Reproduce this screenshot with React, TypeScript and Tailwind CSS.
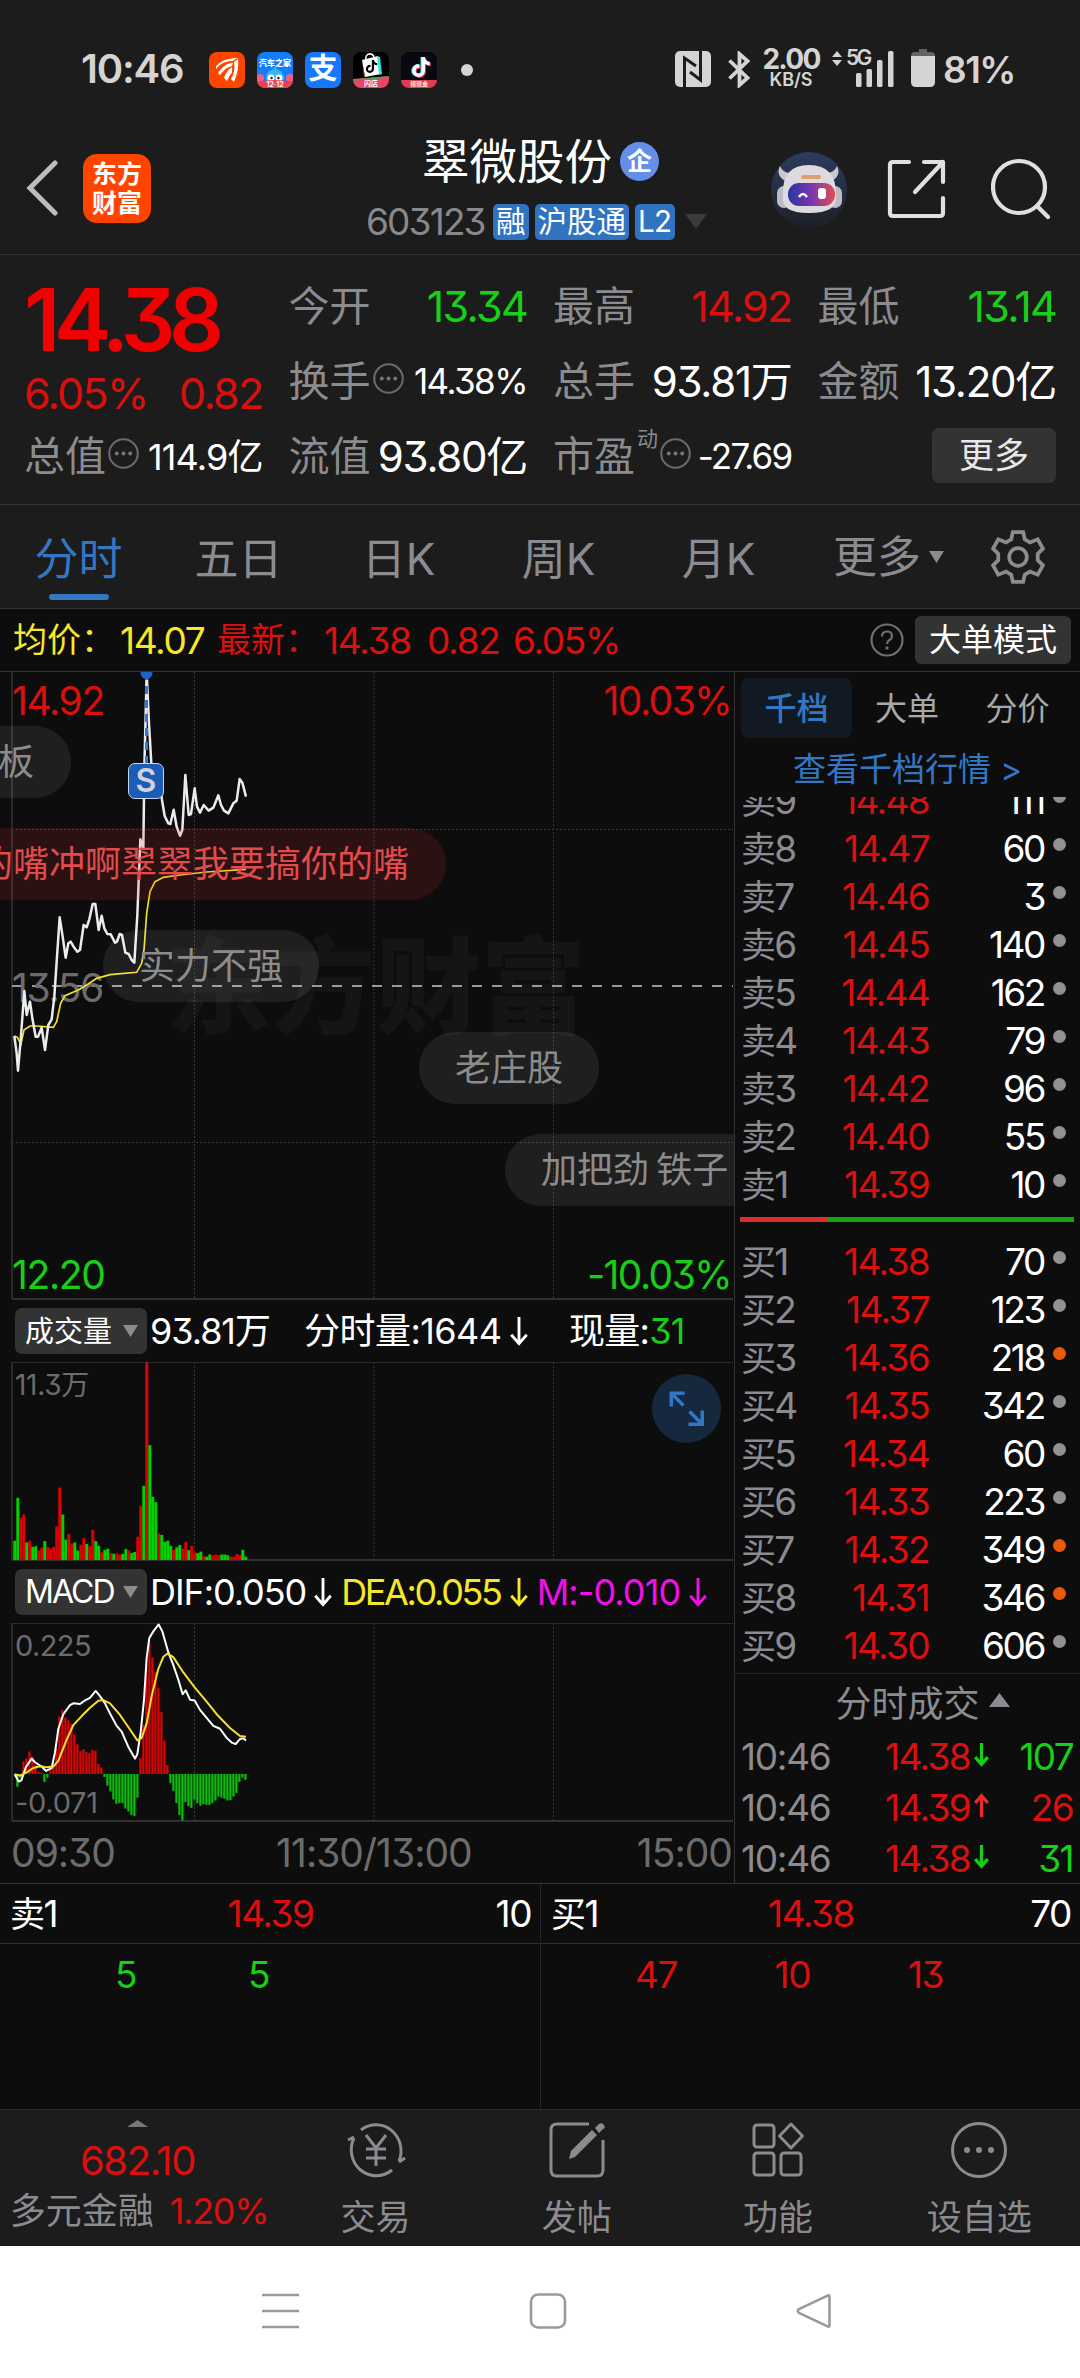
import type { ReactNode } from 'react'
import { FaTiktok } from 'react-icons/fa6'
import { clsx } from 'clsx'

const RED = 'text-[#dc0f0f]'
const GREEN = 'text-[#17cf17]'

const asks = [
  { label: '卖9', price: '14.48', volume: '111' },
  { label: '卖8', price: '14.47', volume: '60' },
  { label: '卖7', price: '14.46', volume: '3' },
  { label: '卖6', price: '14.45', volume: '140' },
  { label: '卖5', price: '14.44', volume: '162' },
  { label: '卖4', price: '14.43', volume: '79' },
  { label: '卖3', price: '14.42', volume: '96' },
  { label: '卖2', price: '14.40', volume: '55' },
  { label: '卖1', price: '14.39', volume: '10' },
]

const bids = [
  { label: '买1', price: '14.38', volume: '70' },
  { label: '买2', price: '14.37', volume: '123' },
  { label: '买3', price: '14.36', volume: '218', hot: true },
  { label: '买4', price: '14.35', volume: '342' },
  { label: '买5', price: '14.34', volume: '60' },
  { label: '买6', price: '14.33', volume: '223' },
  { label: '买7', price: '14.32', volume: '349', hot: true },
  { label: '买8', price: '14.31', volume: '346', hot: true },
  { label: '买9', price: '14.30', volume: '606' },
]

const trades = [
  { time: '10:46', price: '14.38', up: false, qty: '107' },
  { time: '10:46', price: '14.39', up: true, qty: '26' },
  { time: '10:46', price: '14.38', up: false, qty: '31' },
]

// positive = red bar, negative = green bar
const volumes = [
  -53, -171, 116, 125, -48, 53, -36, -38, 26, 34, -52, 36, 32, 36, 92, 199, -125, -56, 71, 45, -48, -26, 42, 60, -44,
  38, 83, -52, -39, 21, -28, -31, 19, -17, 18, 15, -17, -30, 26, -19, -22, 64, 148, -204, 543, -316, -174, -159, 73,
  -69, -50, -53, -39, 28, -35, -41, 31, 49, -27, 39, 21, -19, -23, 10, -9, -15, 12, 15, 13, -15, -15, -13, 9, 9, 16,
  14, -28, -9,
]

const macd = [
  0, -35, -10, 35, 43, 62, 48, 25, 6, 3, -22, -10, 10, 20, 70, 158, 176, 155, 148, 138, 108, 82, 63, 68, 60, 58, 66,
  64, 28, 18, -8, -32, -48, -70, -82, -80, -80, -95, -103, -113, -116, -65, 45, 135, 300, 360, 320, 280, 237, 170, 92,
  25, -25, -47, -80, -113, -128, -77, -88, -93, -70, -80, -87, -83, -85, -85, -80, -73, -62, -65, -68, -73, -72, -62,
  -52, -22, -10, -16,
]

const priceLine =
  '43,1128 50,1180 54,1232 62,1140 73,993 80,1065 90,1025 97,1075 107,1130 114,1130 125,1103 135,1170 145,1095 155,1078 163,1010 170,905 179,772 188,830 197,893 205,850 212,845 222,862 232,875 240,870 251,795 260,802 268,778 278,732 286,732 296,810 305,767 313,805 322,822 332,823 345,848 351,845 359,822 366,825 376,878 386,882 395,900 403,908 412,765 421,538 430,565 433,330 440,38 447,190 456,345 463,375 475,318 486,420 494,468 505,490 511,492 521,449 530,500 540,527 547,510 556,345 566,465 573,462 584,385 591,440 600,458 611,435 626,452 640,443 655,406 663,435 672,452 685,460 700,430 710,422 719,357 727,368 738,410'

const avgLine =
  '43,1128 52,1132 63,1152 72,1110 90,1098 110,1098 160,1102 170,1085 182,1030 195,1007 235,990 260,975 290,955 330,944 410,937 425,910 432,870 440,760 450,695 465,665 490,652 540,645 620,636 738,628'

const difLine =
  '44,1305 56,1325 64,1322 78,1285 95,1262 105,1272 125,1284 138,1296 155,1288 165,1245 175,1180 190,1140 210,1115 220,1110 240,1112 255,1102 270,1095 287,1076 300,1090 315,1110 330,1138 350,1172 365,1188 385,1230 405,1262 412,1250 422,1190 432,1100 440,985 448,930 460,912 476,893 487,912 505,970 520,1005 535,1045 548,1085 557,1074 570,1100 584,1102 600,1128 620,1150 640,1172 660,1180 680,1205 695,1218 707,1222 720,1208 730,1206 738,1212'

const deaLine =
  '44,1305 60,1309 80,1300 100,1288 120,1283 140,1286 160,1284 175,1268 200,1210 220,1170 245,1145 270,1122 295,1103 310,1101 330,1110 360,1142 390,1182 412,1212 425,1205 440,1165 455,1090 475,1015 490,982 503,973 520,983 550,1025 584,1066 615,1100 650,1140 690,1178 720,1200 738,1202'

function Triangle({ className, up = false }: { className?: string; up?: boolean }) {
  return (
    <svg viewBox="0 0 10 8" preserveAspectRatio="none" className={clsx('shrink-0 fill-current', className)}>
      <path d={up ? 'M5 0 10 8H0Z' : 'M0 0H10L5 8Z'} />
    </svg>
  )
}

function Arrow({ className, up = false, width = 2.6 }: { className?: string; up?: boolean; width?: number }) {
  return (
    <svg viewBox="0 0 18 28" className={clsx('shrink-0 fill-none stroke-current', className)} strokeWidth={width}>
      <path d={up ? 'M9 27V3M2 11 9 3l7 8' : 'M9 1v24M2 17l7 8 7-8'} />
    </svg>
  )
}

function InfoDots() {
  return (
    <svg viewBox="0 0 30 30" className="mb-[6px] ml-[2px] h-[31px] w-[31px] shrink-0 fill-[#77777b]">
      <circle cx="15" cy="15" r="13.8" fill="none" stroke="#6a6a6d" strokeWidth="2" />
      <circle cx="8.5" cy="15" r="1.9" />
      <circle cx="15" cy="15" r="1.9" />
      <circle cx="21.5" cy="15" r="1.9" />
    </svg>
  )
}

function StatusBar() {
  return (
    <div className="flex h-[140px] items-center pl-[81px] text-[#d4d4d4]">
      <span className="mb-[2px] w-[128px] text-[40px] font-semibold tracking-[-0.03em]">10:46</span>
      <div className="flex gap-3">
        <svg viewBox="0 0 36 36" className="h-9 w-9">
          <rect width="36" height="36" rx="8" fill="#ff4400" />
          <path d="M7 14C13 8 20 6 29 6c-3 1-4 2-5 3C17 9 12 11 7 17Z" fill="#fff" />
          <path d="M9 21c4-6 9-10 15-10l-1 3c-5 1-8 4-12 9Z" fill="#fff" />
          <path d="M15 26c2-6 5-9 8-11v6c-2 1-3 4-5 8Z" fill="#fff" />
          <path d="M25 10l4-3c1 8-1 16-4 23l-3-3c3-5 4-10 3-17Z" fill="#fff" />
        </svg>
        <div className="relative h-9 w-9 overflow-hidden rounded-[8px] bg-[#127dfa]">
          <svg viewBox="0 0 36 36" className="absolute inset-0">
            <circle cx="18" cy="26" r="9" fill="#37b4f5" />
            <path d="M18 14l3 5h-6Z" fill="#37b4f5" />
            <circle cx="14" cy="26" r="3.4" fill="#fff" />
            <circle cx="22" cy="26" r="3.4" fill="#fff" />
            <circle cx="14.6" cy="26" r="1.2" fill="#123" />
            <circle cx="21.4" cy="26" r="1.2" fill="#123" />
            <circle cx="3" cy="26" r="4" fill="#f0607e" />
            <circle cx="33" cy="26" r="4" fill="#f0607e" />
            <path d="M0 30Q18 26 36 30V36H0Z" fill="#f23d4c" />
          </svg>
          <span className="absolute inset-x-0 top-[7px] text-center text-[8px] leading-none font-black text-white">汽车之家</span>
          <span className="absolute inset-x-0 bottom-0 text-center text-[7px] leading-none font-bold text-white">12·12</span>
        </div>
        <div className="flex h-9 w-9 items-center justify-center rounded-[8px] bg-[#1677ff] text-[29px] leading-none font-bold text-white">
          <span className="-mt-1">支</span>
        </div>
        <div className="relative h-9 w-9 overflow-hidden rounded-[8px] bg-black">
          <svg viewBox="0 0 36 36" className="absolute inset-0">
            <path d="M13 7a4 4 0 0 1 8-2" fill="none" stroke="#fff" strokeWidth="1.6" />
            <path d="M9 8 25 4 28 22 12 25Z" fill="#fff" />
            <path d="M24 4l3 1 2 17-3 1Z" fill="#2ee6e0" />
            <path d="M9 8l3 17-1 0Z" fill="#fe2c55" />
            <path d="M0 27 36 24V36H0Z" fill="#ea4468" />
            <path d="M0 28 36 25" stroke="#4ba05c" strokeWidth="1.4" />
          </svg>
          <FaTiktok className="absolute top-[8px] left-[12px] h-[13px] w-[13px] text-black" />
          <span className="absolute inset-x-0 bottom-px text-center text-[7px] leading-none font-bold text-white">闪店</span>
        </div>
        <div className="relative h-9 w-9 overflow-hidden rounded-[8px] bg-[#080812]">
          <FaTiktok className="absolute top-[5px] left-[9px] h-5 w-5 text-[#25f4ee]" />
          <FaTiktok className="absolute top-[6px] left-[11px] h-5 w-5 text-[#fe2c55]" />
          <FaTiktok className="absolute top-[5px] left-[10px] h-5 w-5 text-white" />
          <div className="absolute inset-x-0 bottom-0 h-2 bg-[#e23a52] text-center text-[6px] leading-[8px] font-bold text-[#ffe9c4]">领现金</div>
        </div>
      </div>
      <div className="ml-6 h-3 w-3 rounded-full bg-[#d4d4d4]" />

      <svg viewBox="0 0 36 36" className="mb-[2px] ml-[202px] h-9 w-9">
        <rect width="36" height="36" rx="5" fill="#d4d4d4" />
        <path d="M9.500 36V7L21 15M25.500 0V29L15 21" fill="none" stroke="#1c1c1c" strokeWidth="3" />
      </svg>
      <svg viewBox="0 0 23 37" className="mb-[2px] ml-[17px] h-[37px] w-[23px] fill-none stroke-current" strokeWidth="3.8">
        <path d="M1.500 9.500 19.500 27 11.500 34V3l8 7L1.500 27.500" />
      </svg>
      <div className="mb-[4px] ml-[10px] flex w-[60px] flex-col items-center">
        <span className="text-[28px] leading-[22px] font-bold tracking-[-0.06em]">2.00</span>
        <span className="mt-px text-[18px] leading-[17px] font-semibold">KB/S</span>
      </div>
      <svg viewBox="0 0 10 15" className="mb-[24px] ml-[11px] h-[15px] w-[10px] fill-current">
        <path d="M5 0 10 6H0ZM5 15 0 9H10Z" />
      </svg>
      <div className="relative mb-[2px] ml-1 h-9 w-12">
        <span className="absolute -top-px left-0 text-[21px] leading-[16px] font-semibold tracking-[-0.13em]">5G</span>
        <svg viewBox="0 0 48 36" className="absolute inset-0 fill-current">
          <rect x="10" y="22" width="5.500" height="14" rx="1.500" />
          <rect x="20.500" y="18" width="5.500" height="18" rx="1.500" />
          <rect x="31" y="9" width="5.500" height="27" rx="1.500" />
          <rect x="42" y="0" width="5.500" height="36" rx="1.500" />
        </svg>
      </div>
      <svg viewBox="0 0 24 38" className="mb-[4px] ml-[17px] h-[38px] w-6">
        <path d="M8 0h8v3h4q4 0 4 4H0q0-4 4-4h4Z" fill="#636363" />
        <path d="M0 7h24v26q0 5-5 5H5q-5 0-5-5Z" fill="#d4d4d4" />
      </svg>
      <span className="mb-px ml-2 text-[37px] font-semibold tracking-[-0.04em]">81%</span>
    </div>
  )
}

function Tag({ children }: { children: ReactNode }) {
  return (
    <span className="flex h-[36px] shrink-0 items-center rounded-[5px] bg-[#3073c0] px-[3px] text-[29.500px] whitespace-nowrap text-white">
      {children}
    </span>
  )
}

function TitleBar() {
  return (
    <div className="flex h-[114px] items-center pb-[15px] pl-[26px]">
      <svg viewBox="0 0 32 56" className="mb-1 h-[56px] w-8 fill-none stroke-[#bdbdbd]" strokeWidth="5" strokeLinecap="round">
        <path d="M29 3 4 28l25 25" />
      </svg>
      <div className="mb-[2px] ml-[25px] flex h-[69px] w-[68px] flex-col items-center justify-center rounded-[14px] bg-[#ff4400] text-[25px] leading-[29px] font-bold text-white">
        <span>东方</span>
        <span>财富</span>
      </div>
      <div className="ml-[215px] flex w-[343px] flex-col pt-[7px]">
        <div className="flex h-[52px] items-center pl-[56px]">
          <span className="text-[47.500px] text-white">翠微股份</span>
          <span className="ml-[8px] flex h-[39px] w-[39px] items-center justify-center rounded-full bg-[#648ee8] text-[25px] font-bold text-white">
            企
          </span>
        </div>
        <div className="mt-[13px] flex h-[50px] items-center gap-[6px] pb-[8px]">
          <span className="w-[121px] shrink-0 text-[37px] tracking-[-0.05em] text-[#88888d]">603123</span>
          <Tag>融</Tag>
          <Tag>沪股通</Tag>
          <Tag>
            <span className="tracking-[-0.02em]">L2</span>
          </Tag>
          <Triangle className="ml-1 h-[15px] w-[22px] text-[#3b3b3b]" />
        </div>
      </div>
      <svg viewBox="0 0 76 76" className="ml-[62px] h-[76px] w-[76px]">
        <defs>
          <linearGradient id="disc" x1="0" y1="0" x2="0" y2="1">
            <stop offset="0" stopColor="#2c3c5e" />
            <stop offset="1" stopColor="#1d2027" />
          </linearGradient>
          <linearGradient id="visor">
            <stop offset="0" stopColor="#2a35a0" />
            <stop offset="0.5" stopColor="#7a36b0" />
            <stop offset="1" stopColor="#e0504e" />
          </linearGradient>
        </defs>
        <circle cx="38" cy="38" r="38" fill="url(#disc)" />
        <path d="M16 30Q4 24 9 14q3 7 10 7ZM59 30q12-6 7-16-3 7-10 7Z" fill="#c9c7cd" />
        <rect x="6" y="34" width="14" height="22" rx="7" fill="#bdbcc4" />
        <rect x="57" y="34" width="14" height="22" rx="7" fill="#bdbcc4" />
        <path d="M12 44Q10 13 38 13t27 31q2 17-27 17T12 44Z" fill="#dddbe0" />
        <rect x="17" y="31" width="47" height="23" rx="11" fill="url(#visor)" />
        <rect x="30" y="23" width="20" height="4" rx="2" fill="#dfa070" />
        <path d="M28 45q4-6 8 0" fill="none" stroke="#fff" strokeWidth="2.500" />
        <rect x="47" y="36" width="8" height="11" rx="3" fill="#fff" />
      </svg>
      <svg viewBox="0 0 59 60" className="mb-px ml-[40px] h-[60px] w-[59px] fill-none stroke-[#e0e0e0]" strokeWidth="4.200" strokeLinecap="round" strokeLinejoin="round">
        <path d="M22 3H6Q3 3 3 6V54q0 3 3 3H53q3 0 3-3V39M37 3H56V23M56 3 28 33" />
      </svg>
      <svg viewBox="0 0 60 62" className="mb-[2px] ml-[45px] h-[62px] w-[60px] fill-none stroke-[#e0e0e0]" strokeWidth="4.200" strokeLinecap="round">
        <circle cx="28" cy="29" r="26" />
        <path d="M46 48 57 59" />
      </svg>
    </div>
  )
}

interface StatProps {
  label: string
  value: string
  className?: string
  info?: boolean
  sup?: string
}

function Stat({ label, value, className = 'text-[42px] tracking-[-0.03em] text-white', info = false, sup }: StatProps) {
  return (
    <div className="flex items-center justify-between whitespace-nowrap">
      <div className="flex items-center text-[41px] text-[#8b8b90]">
        {label}
        {sup && <span className="mb-9 ml-[2px] text-[21px]">{sup}</span>}
        {info && <InfoDots />}
      </div>
      <span className={className}>{value}</span>
    </div>
  )
}

function QuoteGrid() {
  return (
    <div className="grid h-[250px] grid-cols-4 grid-rows-[75px_75px_75px] gap-x-[26px] border-b border-[#333] pr-[24px] pl-[24px] pt-[14px]">
      <div className="row-span-2 flex flex-col">
        <span className="mt-[8px] h-[87px] text-[86px] leading-[87px] font-semibold tracking-[-0.075em] text-[#f00000]">14.38</span>
        <div className={clsx('mt-[8px] flex justify-between text-[43px] tracking-[-0.04em]', RED)}>
          <span>6.05%</span>
          <span>0.82</span>
        </div>
      </div>
      <Stat label="今开" value="13.34" className={clsx('text-[43px] tracking-[-0.04em]', GREEN)} />
      <Stat label="最高" value="14.92" className={clsx('text-[43px] tracking-[-0.04em]', RED)} />
      <Stat label="最低" value="13.14" className={clsx('text-[43px] tracking-[-0.04em]', GREEN)} />
      <Stat label="换手" value="14.38%" info className="text-[35px] tracking-[-0.045em] text-white" />
      <Stat label="总手" value="93.81万" />
      <Stat label="金额" value="13.20亿" />
      <Stat label="总值" value="114.9亿" info className="text-[36px] tracking-[-0.025em] text-white" />
      <Stat label="流值" value="93.80亿" />
      <Stat label="市盈" value="-27.69" info sup="动" className="text-[35px] tracking-[-0.05em] text-white" />
      <div className="flex items-center justify-end">
        <span className="mb-[3px] flex h-[55px] w-[124px] items-center justify-center rounded-[7px] bg-[#333] text-[35px] text-[#e8e8e8]">更多</span>
      </div>
    </div>
  )
}

function PeriodTabs() {
  const tabs = ['分时', '五日', '日K', '周K', '月K']
  return (
    <div className="flex h-[104px] border-b border-[#333] text-[44px] text-[#8b8b90]">
      {tabs.map((tab, i) => (
        <div key={tab} className={clsx('flex w-40 flex-col items-center pt-[21px] pr-[3px]', i === 0 && 'text-[#3377c3]')}>
          <span className="h-[66px] leading-[66px]">{tab}</span>
          {i === 0 && <span className="mt-[2px] h-[6px] w-[60px] rounded-full bg-[#3377c3]" />}
        </div>
      ))}
      <div className="ml-[33px] flex items-center gap-[8px]">
        更多
        <Triangle className="h-[12px] w-[15px]" />
      </div>
      <svg viewBox="0 0 52 52" className="mt-[25px] ml-[47px] h-[54px] w-[54px] fill-none stroke-current" strokeWidth="3.600">
        <path d="M21 2h10l1.500 7 5 3 7.500-3 5 9-5 5v6l5 5-5 9-7.500-3-5 3-1.500 7H21l-1.500-7-5-3-7.500 3-5-9 5-5v-6l-5-5 5-9 7.500 3 5-3Z" />
        <circle cx="26" cy="26" r="8.500" />
      </svg>
    </div>
  )
}

function Pill({ className, children }: { className: string; children: ReactNode }) {
  return (
    <span className={clsx('absolute flex h-[72px] items-center rounded-full px-9 text-[36px] whitespace-nowrap', className)}>
      {children}
    </span>
  )
}

function Grid({ height }: { height: number }) {
  return (
    <g stroke="#383838" strokeWidth="1" strokeDasharray="2 2">
      <path d={`M194.500 0V${height}M374 0V${height}M553.500 0V${height}`} />
    </g>
  )
}

function PriceChart() {
  return (
    <div className="relative h-[628px] overflow-hidden">
      <div className="absolute top-[262px] left-[166px] text-[105px] font-black text-[#151515]">东方财富</div>
      <svg viewBox="0 0 734 628" className="absolute inset-0 h-[628px] w-[734px] fill-none">
        <Grid height={627} />
        <path d="M12 157.500H733M12 470.500H733" stroke="#383838" strokeDasharray="2 2" />
        <path d="M12 0V627" stroke="#2a2a2a" strokeWidth="2" />
        <path d="M12 627H733" stroke="#303030" strokeWidth="2" />
        <path d="M12 314H733" stroke="#999" strokeWidth="2" strokeDasharray="10 10" />
      </svg>
      <span className="absolute top-[296px] left-[12px] text-[39px] tracking-[-0.035em] text-[#6c6c6c]">13.56</span>
      <svg viewBox="0 0 734 628" className="absolute inset-0 h-[628px] w-[734px] fill-none">
        <g transform="translate(0 -12) scale(0.33333)">
          <polyline points={avgLine} stroke="#f5e12c" strokeWidth="5" />
          <polyline points={priceLine} stroke="#ececec" strokeWidth="7.500" strokeLinejoin="round" />
        </g>
        <path d="M146.500 0V92" stroke="#2c7ae8" strokeWidth="3" strokeDasharray="8 6" />
        <circle cx="146.500" cy="1" r="6" fill="#1f62c4" />
      </svg>
      <span className={clsx('absolute top-[9px] left-[12px] text-[39px] tracking-[-0.035em]', RED)}>14.92</span>
      <span className={clsx('absolute top-[9px] right-[3px] text-[39px] tracking-[-0.04em]', RED)}>10.03%</span>
      <span className={clsx('absolute bottom-[6px] left-[12px] text-[39px] tracking-[-0.035em]', GREEN)}>12.20</span>
      <span className={clsx('absolute right-[3px] bottom-[6px] text-[39px] tracking-[-0.04em]', GREEN)}>-10.03%</span>
      <span className="absolute top-[91px] left-[128px] flex h-[36px] w-[36px] items-center justify-center rounded-[7px] border border-[#c5d6ee] bg-[#1b5cb8] text-[32px] font-semibold text-[#d0d4da]">
        S
      </span>
      <Pill className="top-[54px] -left-[38px] bg-white/8 pr-[37px] text-[#8c8c8c]">板</Pill>
      <Pill className="top-[156px] -left-[61px] bg-[#e62828]/14 pr-[37px] pl-[38px] text-[#e24b4b]">的嘴冲啊翠翠我要搞你的嘴</Pill>
      <Pill className="top-[258px] left-[103px] bg-white/8 text-[#8c8c8c]">实力不强</Pill>
      <Pill className="top-[360px] left-[419px] bg-white/8 text-[#8c8c8c]">老庄股</Pill>
      <Pill className="top-[462px] left-[505px] bg-white/8 text-[#8c8c8c] [word-spacing:-3px]">加把劲 铁子</Pill>
    </div>
  )
}

function IndicatorChip({ children }: { children: ReactNode }) {
  return (
    <span className="flex h-[46px] w-[132px] items-center justify-between rounded-[7px] bg-[#333] pr-[9px] pl-[10px] text-[29px] text-white">
      {children}
      <Triangle className="h-[12px] w-[15px] text-[#8b8b90]" />
    </span>
  )
}

function VolumeChart() {
  return (
    <div className="relative h-[199px]">
      <svg viewBox="0 0 734 199" className="h-[199px] w-[734px] fill-none">
        <Grid height={197} />
        <path d="M12 0V198" stroke="#2a2a2a" strokeWidth="2" />
        <path d="M12 0.500H733" stroke="#2a2a2a" />
        <path d="M12 198H733" stroke="#303030" strokeWidth="2" />
        {volumes.map((v, i) => {
          const h = Math.abs(v) / 2.751
          return <rect key={i} x={13.3 + i * 3} y={198 - h} width="3" height={h} fill={v > 0 ? '#e00000' : '#00d200'} />
        })}
      </svg>
      <span className="absolute top-[9px] left-[15px] text-[28px] tracking-[-0.01em] text-[#6c6c6c]">11.3万</span>
      <svg viewBox="0 0 68 68" className="absolute top-[12px] right-[13px] h-[69px] w-[69px] fill-none stroke-[#3377c3]" strokeWidth="3.500">
        <circle cx="34" cy="34" r="34" fill="#16283d" stroke="none" />
        <path d="M32 19H19V32M19 19 31 31M37 37 50 50M36 49.500H49.500V36" />
      </svg>
    </div>
  )
}

function MacdChart() {
  return (
    <div className="relative h-[199px]">
      <svg viewBox="0 0 734 199" className="h-[199px] w-[734px] fill-none">
        <Grid height={197} />
        <path d="M12 0V198" stroke="#2a2a2a" strokeWidth="2" />
        <path d="M12 0.500H733" stroke="#2a2a2a" />
        <path d="M12 198H733" stroke="#303030" strokeWidth="2" />
        {macd.map((v, i) => {
          const h = Math.abs(v) / 2.751
          return (
            <g key={i} fill={v > 0 ? '#dc0404' : '#0cbd0c'}>
              <rect x={13.3 + i * 3} y={v > 0 ? 151 - h : 151} width="2" height={h} />
              <rect x={15.3 + i * 3} y={v > 0 ? 151 - h : 151} width="1" height={h} opacity="0.4" />
            </g>
          )
        })}
        <g transform="scale(0.33333 0.3635) translate(0 -889)" strokeWidth="2" strokeLinejoin="round">
          <polyline points={difLine} stroke="#fff" vectorEffect="non-scaling-stroke" />
          <polyline points={deaLine} stroke="#f5e12c" vectorEffect="non-scaling-stroke" />
        </g>
      </svg>
      <span className="absolute top-[8px] left-[15px] text-[29px] tracking-[-0.02em] text-[#6c6c6c]">0.225</span>
      <span className="absolute bottom-[5px] left-[15px] text-[29px] tracking-[-0.01em] text-[#6c6c6c]">-0.071</span>
    </div>
  )
}

function BookRow({ label, price, volume, hot = false }: { label: string; price: string; volume: string; hot?: boolean }) {
  return (
    <div className="flex h-12 shrink-0 items-center pl-[6px] text-[37px] tracking-[-0.045em]">
      <span className="w-[90px] text-[#8b8b90]">
        <span className="text-[35px]">{label[0]}</span>
        {label[1]}
      </span>
      <span className={clsx('w-[98px] text-right', RED)}>{price}</span>
      <span className="w-[115px] text-right tracking-[-0.065em] text-white">{volume}</span>
      <span className={clsx('mb-2 ml-[9px] h-[13px] w-[13px] rounded-full', hot ? 'bg-[#ec5a08]' : 'bg-[#909095]')} />
    </div>
  )
}

function OrderBook() {
  return (
    <div className="flex w-[346px] flex-col border-l border-[#333]">
      <div className="flex items-center pt-[6px] pl-[6px] text-[32px] text-[#a8a8a8]">
        <span className="flex h-[60px] w-[111px] items-center justify-center rounded-[8px] bg-[#111a23] pt-[2px] font-medium text-[#3377c3]">千档</span>
        <span className="flex w-[110px] justify-center pt-[2px]">大单</span>
        <span className="flex w-[111px] justify-center pt-[2px]">分价</span>
      </div>
      <div className="mt-[15px] flex h-[32px] items-center justify-center text-[33px] whitespace-pre text-[#3377c3]">查看千档行情 &gt;</div>
      <div className="mt-[12px] flex h-[411px] shrink-0 flex-col justify-end overflow-hidden">
        {asks.map(row => (
          <BookRow key={row.label} {...row} />
        ))}
      </div>
      <div className="mt-[9px] ml-[5px] flex h-[5px] w-[334px] shrink-0">
        <span className="w-[88px] bg-[#dd2c2c]" />
        <span className="flex-1 bg-[#12a512]" />
      </div>
      <div className="mt-[15px] flex flex-col">
        {bids.map(row => (
          <BookRow key={row.label} {...row} />
        ))}
      </div>
      <div className="mt-[4px] flex h-[58px] shrink-0 items-center justify-center gap-[9px] border-t border-[#262626] pt-[2px] pl-[30px] text-[36px] text-[#8b8b90]">
        分时成交
        <Triangle up className="mb-2 h-[14px] w-[21px]" />
      </div>
      {trades.map((t, i) => (
        <div key={i} className="flex h-[51px] shrink-0 items-center pr-[7px] pl-[6px] text-[37px] tracking-[-0.045em]">
          <span className="tracking-[-0.035em] text-[#8b8b90]">{t.time}</span>
          <span className={clsx('ml-auto', RED)}>{t.price}</span>
          <Arrow up={t.up} width={3.6} className={clsx('mb-1 ml-[3px] h-[25px] w-[17px]', t.up ? 'text-[#ee2a2a]' : GREEN)} />
          <span className={clsx('w-[83px] text-right', t.up ? RED : GREEN)}>{t.qty}</span>
        </div>
      ))}
    </div>
  )
}

interface QueueProps {
  label: string
  price: string
  total: string
  lots: string[]
  lotClass: string
  className?: string
}

function Queue({ label, price, total, lots, lotClass, className }: QueueProps) {
  return (
    <div className={clsx('w-[540px] text-[37px] tracking-[-0.04em]', className)}>
      <div className="grid h-[60px] grid-cols-3 items-center border-b border-[#2e2e2e] pr-[9px] pl-[10px] text-white">
        <span>
          <span className="text-[35px]">{label[0]}</span>
          {label[1]}
        </span>
        <span className={clsx('text-center', RED)}>{price}</span>
        <span className="text-right">{total}</span>
      </div>
      <div className={clsx('flex h-[61px] items-center pl-[3px]', lotClass)}>
        {lots.map((lot, i) => (
          <span key={i} className="w-[133px] text-right">
            {lot}
          </span>
        ))}
      </div>
    </div>
  )
}

function NavItem({ label, children }: { label: string; children: ReactNode }) {
  return (
    <div className="flex flex-1 flex-col items-center pt-[10px] text-[35px] text-[#8b8b90]">
      <svg viewBox="0 0 60 60" className="h-[60px] w-[64px] fill-none stroke-current" strokeWidth="3">
        {children}
      </svg>
      <span className="mt-[12px] h-[50px] leading-[50px]">{label}</span>
    </div>
  )
}

function BottomNav() {
  return (
    <div className="flex h-[137px] border-t border-[#2c2c2c] bg-[#1c1c1c]">
      <div className="flex w-[275px] flex-col items-center pt-[10px]">
        <Triangle up className="h-[7px] w-[21px] text-[#77777b]" />
        <span className={clsx('mt-[9px] text-[40px] leading-[50px] tracking-[-0.035em]', RED)}>682.10</span>
        <div className="flex gap-[16px] pl-[3px] text-[36px] leading-[50px] whitespace-nowrap text-[#8b8b90]">
          多元金融
          <span className={clsx('tracking-[-0.035em]', RED)}>1.20%</span>
        </div>
      </div>
      <NavItem label="交易">
        <path d="M15 10A25 26 0 0 1 53 41M46 50A25 26 0 0 1 8 18M8 17 2 20M53 42l6-4" />
        <path d="M20 15 30 28 40 15M20 29H40M20 38H40M30 28V46" />
      </NavItem>
      <NavItem label="发帖">
        <path d="M42 4H10Q4 4 4 10V50Q4 56 10 56H50Q56 56 56 50V20" />
        <path d="M22 39 24 31 45 10 50 15 28 37Z" className="fill-current" stroke="none" />
        <path d="M48 8 52 4Q55 2 57 5T56 9L52 13Z" className="fill-current" stroke="none" />
      </NavItem>
      <NavItem label="功能">
        <rect x="6" y="5" width="20" height="22" rx="3" />
        <rect x="6" y="33" width="20" height="22" rx="3" />
        <rect x="33" y="33" width="20" height="22" rx="3" />
        <path d="M43 4 54.500 16 43 28 31.500 16Z" strokeLinejoin="round" />
      </NavItem>
      <NavItem label="设自选">
        <circle cx="30" cy="30" r="26.500" />
        <g className="fill-current" stroke="none">
          <circle cx="18" cy="30" r="3" />
          <circle cx="30" cy="30" r="3" />
          <circle cx="42" cy="30" r="3" />
        </g>
      </NavItem>
    </div>
  )
}

export default function App() {
  return (
    <div className="h-[2378px] w-[1080px] overflow-hidden bg-[#0d0d0d] font-['Inter','Noto_Sans_CJK_SC',sans-serif] leading-none [font-feature-settings:'cv09']">
      <div className="bg-[#1c1c1c]">
        <div className="border-b border-[#333]">
          <StatusBar />
          <TitleBar />
        </div>
        <QuoteGrid />
        <PeriodTabs />
      </div>

      <div className={clsx('flex h-[63px] items-center border-b border-[#333] pl-[13px] text-[37px] tracking-[-0.035em] whitespace-nowrap', RED)}>
        <span className="w-[107px] text-[34px] tracking-normal text-[#f7e72a]">均价：</span>
        <span className="w-[97px] text-[#f7e72a]">14.07</span>
        <span className="w-[107px] text-[34px] tracking-normal">最新：</span>
        <span className="w-[103px]">14.38</span>
        <span className="w-[86px]">0.82</span>
        <span>6.05%</span>
        <svg viewBox="0 0 34 34" className="ml-auto h-[34px] w-[34px] fill-none stroke-[#707074]" strokeWidth="2.200">
          <circle cx="17" cy="17" r="15.500" />
          <path d="M12 13.500q0-5 5-5t5 4.500q0 2.500-2.500 4T17 21" />
          <path d="M17 23.500v3" strokeWidth="2.800" />
        </svg>
        <span className="mr-[9px] ml-[11px] flex h-[48px] w-[156px] items-center justify-center rounded-[6px] bg-[#333] text-[32px] tracking-normal text-white">
          大单模式
        </span>
      </div>

      <div className="flex h-[1212px] border-b border-[#333]">
        <div className="w-[734px]">
          <PriceChart />
          <div className="flex h-[62px] items-center pl-[15px] text-[36px] whitespace-nowrap text-white">
            <IndicatorChip>成交量</IndicatorChip>
            <span className="ml-[3px] w-[154px] tracking-[-0.03em]">93.81万</span>
            <span className="tracking-[-0.015em]">分时量:1644</span>
            <Arrow className="ml-[7px] h-[31px] w-[20px]" />
            <span className="ml-auto w-[165px] tracking-[-0.02em]">
              现量:<span className={GREEN}>31</span>
            </span>
          </div>
          <VolumeChart />
          <div className="flex h-[62px] items-center pl-[15px] text-[36px] whitespace-nowrap text-white">
            <IndicatorChip>
              <span className="text-[32px] tracking-[-0.06em]">MACD</span>
            </IndicatorChip>
            <span className="ml-[3px] tracking-[-0.03em]">DIF:0.050</span>
            <Arrow className="ml-[7px] h-[31px] w-[20px]" />
            <span className="flex items-center text-[#f7e72a]">
              <span className="ml-[8px] tracking-[-0.065em]">DEA:0.055</span>
              <Arrow className="ml-[8px] h-[31px] w-[20px]" />
            </span>
            <span className="flex items-center text-[#f010e8]">
              <span className="ml-[8px] tracking-[-0.025em]">M:-0.010</span>
              <Arrow className="ml-[8px] h-[31px] w-[20px]" />
            </span>
          </div>
          <MacdChart />
          <div className="flex h-[61px] items-center justify-between pr-[2px] pl-[11px] text-[39px] tracking-[-0.025em] text-[#6c6c6c]">
            <span>09:30</span>
            <span className="pr-[4px]">11:30/13:00</span>
            <span>15:00</span>
          </div>
        </div>
        <OrderBook />
      </div>

      <div className="flex h-[225px]">
        <Queue label="卖1" price="14.39" total="10" lots={['5', '5']} lotClass={GREEN} />
        <Queue label="买1" price="14.38" total="70" lots={['47', '10', '13']} lotClass={RED} className="border-l border-[#242424]" />
      </div>

      <BottomNav />

      <div className="flex h-[133px] items-center bg-white pb-[3px]">
        <svg viewBox="0 0 1080 36" className="h-9 w-[1080px] fill-none stroke-[#9a9a9a]" strokeWidth="2.600">
          <path d="M262 2H299M262 18H299M262 34H299" />
          <rect x="531" y="1.500" width="34" height="33" rx="7" />
          <path d="M829.500 4V32Q829.500 35 827 33L799 20Q796.500 18 799 16L827 3Q829.500 1 829.500 4Z" />
        </svg>
      </div>
    </div>
  )
}
